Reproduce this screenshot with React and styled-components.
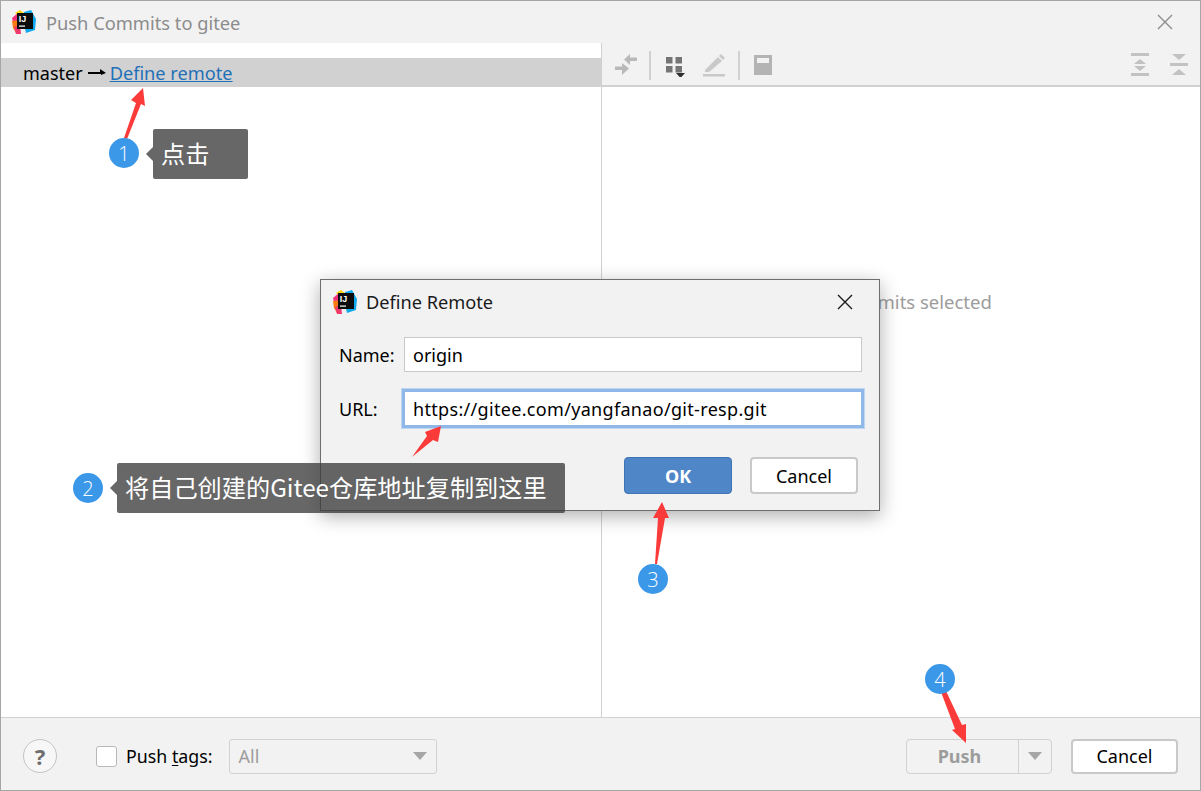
import React from "react";
import styled, { createGlobalStyle } from "styled-components";

const fontStack = `"Noto Sans", "Noto Sans CJK SC", "Open Sans", sans-serif`;

const GlobalStyle = createGlobalStyle`
  html, body {
    margin: 0;
    padding: 0;
    background: #fff;
  }
  body {
    font-family: ${fontStack};
  }
`;

const Window = styled.div`
  position: relative;
  box-sizing: border-box;
  width: 1201px;
  height: 791px;
  overflow: hidden;
  display: flex;
  flex-direction: column;
  border: 1px solid #a6a6a6;
  background: #fff;
`;

const TitleBar = styled.div`
  flex: none;
  height: 42px;
  display: flex;
  align-items: center;
  padding: 0 24px 0 11px;
  background: #f2f2f2;
`;

const WindowTitle = styled.span`
  margin: 0 0 0 10px;
  font-size: 18.3px;
  color: #8c8c8c;
`;

const CloseButton = styled.button`
  margin-left: auto;
  margin-right: ${(p) => p.$inset || 0}px;
  width: 22px;
  height: 22px;
  padding: 0;
  border: 0;
  background: none;
  color: ${(p) => p.$color};
`;

const Body = styled.div`
  flex: 1;
  min-height: 0;
  display: flex;
`;

const LeftPanel = styled.div`
  box-sizing: border-box;
  width: 601px;
  padding-top: 15px;
  border-right: 1px solid #d1d1d1;
`;

const BranchRow = styled.div`
  height: 29px;
  display: flex;
  align-items: center;
  padding-left: 22px;
  background: #d1d1d1;
  font-size: 18px;
  color: #000;
`;

const BranchLink = styled.a`
  font-size: 18.2px;
  color: #1f70b8;
  text-decoration: underline;
`;

const ArrowGlyph = styled.svg`
  margin: 0 4px 0 5px;
`;

const RightPanel = styled.div`
  flex: 1;
  display: flex;
  flex-direction: column;
`;

const Toolbar = styled.div`
  box-sizing: border-box;
  flex: none;
  height: 44px;
  display: flex;
  align-items: center;
  padding: 2px 9px 0 12px;
  background: #f2f2f2;
  border-bottom: 2px solid #d1d1d1;
`;

const ToolIcon = styled.svg`
  flex: none;
  display: block;
  margin-right: ${(p) => p.$gap || 0}px;
`;

const ToolSeparator = styled.div`
  flex: none;
  width: 2px;
  height: 29px;
  margin: 0 ${(p) => p.$after}px 0 ${(p) => p.$before}px;
  background: #d1d1d1;
`;

const ToolSpacer = styled.div`
  flex: 1;
`;

const EmptyText = styled.div`
  padding-top: 202px;
  text-align: center;
  font-size: 18.5px;
  color: #9c9c9c;
`;

const Footer = styled.div`
  box-sizing: border-box;
  flex: none;
  height: 73px;
  display: flex;
  align-items: center;
  padding: 4px 22px 0 22px;
  background: #f2f2f2;
  border-top: 1px solid #d1d1d1;
`;

const HelpButton = styled.div`
  box-sizing: border-box;
  flex: none;
  width: 34px;
  height: 34px;
  display: flex;
  align-items: center;
  justify-content: center;
  border: 1px solid #c4c4c4;
  border-radius: 50%;
  background: #f7f7f7;
  font-size: 22px;
  font-weight: 700;
  color: #6e6e6e;
`;

const CheckBox = styled.div`
  box-sizing: border-box;
  flex: none;
  width: 21px;
  height: 21px;
  margin-left: 39px;
  border: 1px solid #b8b8b8;
  border-radius: 3px;
  background: #fff;
`;

const CheckLabel = styled.span`
  margin-left: 9px;
  font-size: 17.8px;
  color: #000;

  u {
    text-underline-offset: 2px;
  }
`;

const SelectBox = styled.div`
  box-sizing: border-box;
  width: 208px;
  height: 35px;
  margin-left: 16px;
  display: flex;
  align-items: center;
  justify-content: space-between;
  padding: 0 9px;
  border: 1px solid #d1d1d1;
  border-radius: 3px;
  font-size: 18px;
  color: #9c9c9c;
`;

const Caret = styled.div`
  width: 0;
  height: 0;
  border-left: 7px solid transparent;
  border-right: 7px solid transparent;
  border-top: 8px solid #a6a6a6;
`;

const FooterActions = styled.div`
  margin-left: auto;
  display: flex;
  align-items: center;
  gap: 19px;
`;

const SplitButton = styled.div`
  box-sizing: border-box;
  width: 146px;
  height: 35px;
  display: flex;
  border: 1px solid #d1d1d1;
  border-radius: 4px;
`;

const SplitLabel = styled.div`
  flex: 1;
  display: flex;
  align-items: center;
  justify-content: center;
  padding-right: 6px;
  border-right: 1px solid #d1d1d1;
  font-size: 18px;
  font-weight: 700;
  color: #9c9c9c;
`;

const SplitCaret = styled.div`
  width: 32px;
  display: flex;
  align-items: center;
  justify-content: center;
`;

const PlainButton = styled.button`
  box-sizing: border-box;
  width: ${(p) => p.$width || 108}px;
  height: ${(p) => p.$height}px;
  padding: 0;
  border: 2px solid #c9c9c9;
  border-radius: 4px;
  background: #fff;
  font-family: ${fontStack};
  font-size: 18px;
  color: #000;
`;

const PrimaryButton = styled(PlainButton)`
  border: 1px solid #3f75b5;
  background: #4e86c8;
  font-weight: 700;
  color: #fff;
`;

const Dialog = styled.div`
  position: absolute;
  left: 319px;
  top: 278px;
  box-sizing: border-box;
  width: 560px;
  height: 232px;
  padding: 0 17px 0 12px;
  display: flex;
  flex-direction: column;
  border: 1px solid #6e6e6e;
  background: #f2f2f2;
  box-shadow: 0 5px 18px rgba(0, 0, 0, 0.32);
`;

const DialogHead = styled.div`
  height: 44px;
  display: flex;
  align-items: center;
`;

const DialogTitle = styled.span`
  margin-left: 9px;
  font-size: 18.2px;
  color: #1a1a1a;
`;

const FormGrid = styled.div`
  margin: 13px 0 0 6px;
  display: grid;
  grid-template-columns: 65px 1fr;
  row-gap: 17px;
  align-items: center;
  font-size: 18px;
  color: #000;
`;

const TextField = styled.div`
  box-sizing: border-box;
  height: ${(p) => (p.$focused ? 39 : 35)}px;
  margin: 0 ${(p) => (p.$focused ? -2 : 0)}px;
  display: flex;
  align-items: center;
  padding-left: 8px;
  border: ${(p) => (p.$focused ? "3px solid #8fb8e8" : "1px solid #c9c9c9")};
  box-shadow: ${(p) => (p.$focused ? "0 0 0 1px #bdd6f2" : "none")};
  background: #fff;
  letter-spacing: ${(p) => (p.$focused ? 0.32 : 0)}px;
`;

const DialogActions = styled.div`
  margin-top: 29px;
  display: flex;
  justify-content: flex-end;
  gap: 18px;
  padding-right: 4px;
`;

const ArrowLayer = styled.svg`
  position: absolute;
  left: -1px;
  top: -1px;
  pointer-events: none;
`;

const Badge = styled.div`
  position: absolute;
  left: ${(p) => p.$x - 15}px;
  top: ${(p) => p.$y - 15}px;
  width: 30px;
  height: 30px;
  display: flex;
  align-items: center;
  justify-content: center;
  border-radius: 50%;
  background: #3b97e8;
  font-family: "Open Sans", sans-serif;
  font-size: 20px;
  font-weight: 300;
  color: #fff;
`;

const Callout = styled.div`
  position: absolute;
  left: ${(p) => p.$x}px;
  top: ${(p) => p.$y}px;
  box-sizing: border-box;
  width: ${(p) => p.$width}px;
  height: 50px;
  display: flex;
  align-items: center;
  padding: 0 0 3px 8px;
  border-radius: 2px;
  background: rgba(60, 60, 60, 0.78);
  font-family: "Noto Sans CJK SC", "Noto Sans", sans-serif;
  font-size: 24.2px;
  white-space: nowrap;
  color: #fff;

  &::before {
    content: "";
    position: absolute;
    left: -7px;
    top: 18px;
    border-top: 7px solid transparent;
    border-bottom: 7px solid transparent;
    border-right: 7px solid rgba(60, 60, 60, 0.78);
  }
`;

function IdeaLogo() {
  return (
    <svg width="24" height="24" viewBox="0 0 24 24">
      <path d="M0 8 L7 2 L13 4 L12 12 L7 13 L1 12 Z" fill="#f5327e" />
      <path d="M0 11 L7 10 L8 21 L4 23 L1 18 Z" fill="#f97a12" />
      <path d="M2 17 L8 15 L9 24 L4 24 Z" fill="#f0396f" />
      <path d="M12 2 L19 0 L24 9 L23 20 L14 23 L12 14 Z" fill="#10a9ee" />
      <path d="M3 3 L8 0 L12 3 L8 7 Z" fill="#fcd20f" />
      <rect x="5" y="3" width="16" height="16" fill="#0c0c0c" />
      <text x="6.8" y="12" fontFamily="Liberation Sans, sans-serif" fontSize="9" fontWeight="700" fill="#fff">
        IJ
      </text>
      <rect x="7" y="15.5" width="6" height="1.2" fill="#fff" />
    </svg>
  );
}

function CloseIcon() {
  return (
    <svg width="22" height="22" viewBox="0 0 22 22" fill="none" stroke="currentColor" strokeWidth="1.4">
      <path d="M4 4 L18 18 M18 4 L4 18" />
    </svg>
  );
}

function CompareIcon() {
  return (
    <ToolIcon width="24" height="24" viewBox="0 0 24 24" fill="#b9b9b9" $gap={11}>
      <path d="M16 1 L16 4.5 L23 4.5 L23 8 L16 8 L16 12 L10 6.5 Z" />
      <path d="M8 10 L8 13.5 L1 13.5 L1 17 L8 17 L8 22 L15 15.5 Z" />
    </ToolIcon>
  );
}

function GroupIcon() {
  return (
    <ToolIcon width="24" height="24" viewBox="0 0 24 24" fill="#757575" $gap={16}>
      <rect x="4" y="4" width="6.5" height="6.5" />
      <rect x="13.5" y="4" width="6.5" height="6.5" />
      <rect x="4" y="13" width="6.5" height="6.5" />
      <rect x="13.5" y="13" width="6.5" height="6.5" />
      <path d="M14 20 L23 20 L18.5 25 Z" fill="#2e2e2e" />
    </ToolIcon>
  );
}

function PencilIcon() {
  return (
    <ToolIcon width="24" height="24" viewBox="0 0 24 24" fill="#c9c9c9">
      <path d="M3 17 L16 4 L20 8 L7 19 L3 19 Z" />
      <path d="M17 3 L19 1 L23 5 L21 7 Z" />
      <rect x="1" y="21" width="22" height="2.5" />
    </ToolIcon>
  );
}

function PanelIcon() {
  return (
    <ToolIcon width="24" height="24" viewBox="0 0 24 24" $gap={0}>
      <rect x="3" y="2" width="18" height="20" fill="#b4b4b4" />
      <rect x="6" y="5" width="12" height="5" fill="#f2f2f2" />
    </ToolIcon>
  );
}

function ExpandIcon() {
  return (
    <ToolIcon width="24" height="24" viewBox="0 0 24 24" fill="#c2c2c2" $gap={15}>
      <rect x="3" y="0" width="18" height="3" />
      <rect x="3" y="20" width="18" height="3" />
      <path d="M12 6 L18 11 L6 11 Z" />
      <path d="M12 18 L18 13 L6 13 Z" />
    </ToolIcon>
  );
}

function CollapseIcon() {
  return (
    <ToolIcon width="24" height="24" viewBox="0 0 24 24" fill="#c2c2c2">
      <path d="M5 1 L19 1 L12 7 Z" />
      <rect x="3" y="10" width="18" height="3" />
      <path d="M5 22 L19 22 L12 16 Z" />
    </ToolIcon>
  );
}

const arrows = [
  "124,138 136,103 131,100 143,88 145,106 141,104 127,139",
  "412,457 427,436 425,432 441,426 438,442 433,440",
  "655,564 658,518 653,518 662,502 669,518 665,518 657,564",
  "941,692 955,729 952,730 966,743 966,724 962,725 946,691",
];

export default function App() {
  return (
    <>
      <GlobalStyle />
      <Window>
        <TitleBar>
          <IdeaLogo />
          <WindowTitle>Push Commits to gitee</WindowTitle>
          <CloseButton $color="#8c8c8c">
            <CloseIcon />
          </CloseButton>
        </TitleBar>
        <Body>
          <LeftPanel>
            <BranchRow>
              master
              <ArrowGlyph width="18" height="10" viewBox="0 0 18 10">
                <path d="M0 4 H12 V1 L18 5 L13 7 V6 H0 Z" fill="#000" />
              </ArrowGlyph>
              <BranchLink>Define remote</BranchLink>
            </BranchRow>
          </LeftPanel>
          <RightPanel>
            <Toolbar>
              <CompareIcon />
              <ToolSeparator $before={0} $after={11} />
              <GroupIcon />
              <PencilIcon />
              <ToolSeparator $before={12} $after={11} />
              <PanelIcon />
              <ToolSpacer />
              <ExpandIcon />
              <CollapseIcon />
            </Toolbar>
            <EmptyText>No commits selected</EmptyText>
          </RightPanel>
        </Body>
        <Footer>
          <HelpButton>?</HelpButton>
          <CheckBox />
          <CheckLabel>
            Push <u>t</u>ags:
          </CheckLabel>
          <SelectBox>
            All
            <Caret />
          </SelectBox>
          <FooterActions>
            <SplitButton>
              <SplitLabel>Push</SplitLabel>
              <SplitCaret>
                <Caret />
              </SplitCaret>
            </SplitButton>
            <PlainButton $width={107} $height={35}>Cancel</PlainButton>
          </FooterActions>
        </Footer>

        <Dialog>
          <DialogHead>
            <IdeaLogo />
            <DialogTitle>Define Remote</DialogTitle>
            <CloseButton $color="#1a1a1a" $inset={6}>
              <CloseIcon />
            </CloseButton>
          </DialogHead>
          <FormGrid>
            <span>Name:</span>
            <TextField>origin</TextField>
            <span>URL:</span>
            <TextField $focused>https://gitee.com/yangfanao/git-resp.git</TextField>
          </FormGrid>
          <DialogActions>
            <PrimaryButton $height={37}>OK</PrimaryButton>
            <PlainButton $height={37}>Cancel</PlainButton>
          </DialogActions>
        </Dialog>

        <Callout $x={152} $y={128} $width={95}>
          点击
        </Callout>
        <Callout $x={116} $y={462} $width={448}>
          将自己创建的Gitee仓库地址复制到这里
        </Callout>
        <ArrowLayer width="1201" height="791">
          {arrows.map((points) => (
            <polygon key={points} points={points} fill="#fb3a3a" />
          ))}
        </ArrowLayer>
        <Badge $x={123} $y={152}>1</Badge>
        <Badge $x={87} $y={487}>2</Badge>
        <Badge $x={652} $y={578}>3</Badge>
        <Badge $x={939} $y={678}>4</Badge>
      </Window>
    </>
  );
}
